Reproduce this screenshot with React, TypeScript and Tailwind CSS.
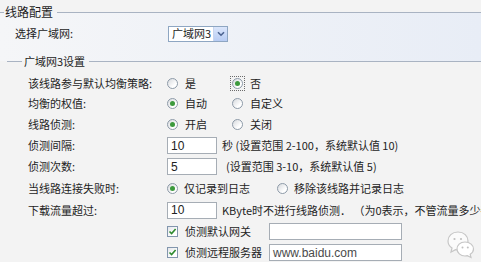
import React from "react";

const LINE = "bg-[#a9b3c2]";

function Radio({ checked, focus }: { checked?: boolean; focus?: boolean }) {
  const circle = (
    <span className="flex items-center justify-center w-[11px] h-[11px] rounded-full border border-[#8d9aa8] bg-[linear-gradient(135deg,#d6d9dd,#ffffff_70%)]">
      {checked && <span className="w-[5px] h-[5px] rounded-full bg-[#3d9a3d]" />}
    </span>
  );
  if (focus) {
    return (
      <span className="-m-[2px] p-[1px] border border-dotted border-[#6b6b6b] flex">{circle}</span>
    );
  }
  return circle;
}

function Check() {
  return (
    <span className="flex items-center justify-center w-[11px] h-[11px] border border-[#8296ad] bg-[linear-gradient(135deg,#e4e6ea,#ffffff_70%)]">
      <svg width="9" height="9" viewBox="0 0 9 9">
        <path d="M1.5 4.5 L3.6 6.6 L7.6 2" fill="none" stroke="#2e8b2e" strokeWidth="1.6" />
      </svg>
    </span>
  );
}

function Input({ value, w, gray }: { value?: string; w: string; gray?: boolean }) {
  return (
    <div
      className={`${w} h-[17px] border border-[#a6adb5] bg-white flex items-center pl-[3px] text-[12px] leading-none [font-family:'Liberation_Sans',sans-serif] ${
        gray ? "text-[#4a4a4a]" : "text-[#222]"
      }`}
    >
      {value}
    </div>
  );
}

export default function App() {
  return (
    <div className="relative w-[481px] h-[262px] overflow-hidden text-[11px] leading-none text-[#232323] [font-family:'Noto_Sans_CJK_SC','Liberation_Sans',sans-serif] bg-[linear-gradient(to_bottom,#f3f3f3_0_12px,transparent_12px_61px,#f3f3f3_61px),linear-gradient(to_right,#f5f6f8,#e8edf6)]">
      {/* legend 1 */}
      <div className="flex items-center h-[24px]">
        <span className={`w-[4px] h-px ${LINE}`} />
        <span className="px-[1px] text-[12px] text-[#1e1e1e]">线路配置</span>
        <span className={`flex-1 ml-[3px] h-px ${LINE}`} />
      </div>
      {/* select row */}
      <div className="flex items-center h-[19px]">
        <span className="pl-[15px] w-[168px]">选择广域网:</span>
        <div className="flex items-center h-[16px] w-[60px] border border-[#8ea6c2] bg-white">
          <span className="flex-1 pl-[3px] text-[11px]">广域网3</span>
          <span className="w-[14px] h-[14px] bg-[linear-gradient(to_bottom,#dbe6fb,#b7ccf3)] border-l border-[#c8d6ef] flex items-center justify-center">
            <svg width="8" height="6" viewBox="0 0 8 6">
              <path d="M1 1.2 L4 4.2 L7 1.2" fill="none" stroke="#4b6390" strokeWidth="1.6" />
            </svg>
          </span>
        </div>
      </div>
      {/* legend 2 */}
      <div className="flex items-center h-[19px] mt-[9px]">
        <span className={`ml-[7px] w-[15px] h-px ${LINE}`} />
        <span className="px-[2px] text-[11px]">广域网3设置</span>
        <span className={`flex-1 ml-[2px] h-px ${LINE}`} />
      </div>

      <div className="mt-[2px] flex flex-col">
        <div className="flex items-center h-[20px]">
          <span className="pl-[28px] w-[167px]">该线路参与默认均衡策略:</span>
          <label className="flex items-center w-[65px]">
            <Radio />
            <span className="ml-[7px]">是</span>
          </label>
          <label className="flex items-center">
            <Radio checked focus />
            <span className="ml-[7px]">否</span>
          </label>
        </div>
        <div className="flex items-center h-[21px]">
          <span className="pl-[28px] w-[167px]">均衡的权值:</span>
          <label className="flex items-center w-[65px]">
            <Radio checked />
            <span className="ml-[7px]">自动</span>
          </label>
          <label className="flex items-center">
            <Radio />
            <span className="ml-[7px]">自定义</span>
          </label>
        </div>
        <div className="flex items-center h-[21px]">
          <span className="pl-[28px] w-[167px]">线路侦测:</span>
          <label className="flex items-center w-[65px]">
            <Radio checked />
            <span className="ml-[7px]">开启</span>
          </label>
          <label className="flex items-center">
            <Radio />
            <span className="ml-[7px]">关闭</span>
          </label>
        </div>
        <div className="flex items-center h-[21px]">
          <span className="pl-[28px] w-[167px]">侦测间隔:</span>
          <Input value="10" w="w-[50px]" />
          <span className="ml-[5px] whitespace-nowrap">秒 (设置范围 2-100，系统默认值 10)</span>
        </div>
        <div className="flex items-center h-[21px]">
          <span className="pl-[28px] w-[167px]">侦测次数:</span>
          <Input value="5" w="w-[50px]" />
          <span className="ml-[9px] whitespace-nowrap">(设置范围 3-10，系统默认值 5)</span>
        </div>
        <div className="flex items-center h-[22px]">
          <span className="pl-[28px] w-[167px]">当线路连接失败时:</span>
          <label className="flex items-center w-[110px]">
            <Radio checked />
            <span className="ml-[6px]">仅记录到日志</span>
          </label>
          <label className="flex items-center">
            <Radio />
            <span className="ml-[6px]">移除该线路并记录日志</span>
          </label>
        </div>
        <div className="flex items-center h-[22px]">
          <span className="pl-[28px] w-[167px] shrink-0">下载流量超过:</span>
          <Input value="10" w="w-[50px] shrink-0" />
          <span className="ml-[5px] whitespace-nowrap">KByte时不进行线路侦测． （为0表示，不管流量多少都进行侦测）</span>
        </div>
        <div className="flex items-center h-[21px]">
          <span className="w-[167px]" />
          <label className="flex items-center w-[102px]">
            <Check />
            <span className="ml-[7px]">侦测默认网关</span>
          </label>
          <Input w="w-[133px]" />
        </div>
        <div className="flex items-center h-[21px]">
          <span className="w-[167px]" />
          <label className="flex items-center w-[102px]">
            <Check />
            <span className="ml-[7px]">侦测远程服务器</span>
          </label>
          <Input value="www.baidu.com" w="w-[133px]" gray />
        </div>
      </div>

      {/* watermark */}
      <svg
        className="absolute left-[446px] top-[229px]"
        width="30"
        height="32"
        viewBox="0 0 30 32"
      >
        <path
          d="M12 3 C6 3 2 7 2 12 C2 15 3.5 17.5 6 19 L5 23 L9.5 20.6 C10.3 20.8 11.1 21 12 21 C18 21 22 17 22 12 C22 7 18 3 12 3 Z"
          fill="#fbfbfb"
          stroke="#c6c6c6"
          strokeWidth="1.2"
        />
        <circle cx="8.5" cy="10" r="1.1" fill="#c0c0c0" />
        <circle cx="15" cy="10" r="1.1" fill="#c0c0c0" />
        <path
          d="M19 13 C14 13 11 16.3 11 20 C11 23.8 14.5 27 19 27 C19.8 27 20.6 26.9 21.3 26.7 L25 28.5 L24.2 25.3 C26.2 24 27.5 22 27.5 20 C27.5 16.3 24 13 19 13 Z"
          fill="#ffffff"
          stroke="#c6c6c6"
          strokeWidth="1.2"
        />
        <circle cx="16.5" cy="18.5" r="1" fill="#c0c0c0" />
        <circle cx="21.8" cy="18.5" r="1" fill="#c0c0c0" />
      </svg>
    </div>
  );
}
